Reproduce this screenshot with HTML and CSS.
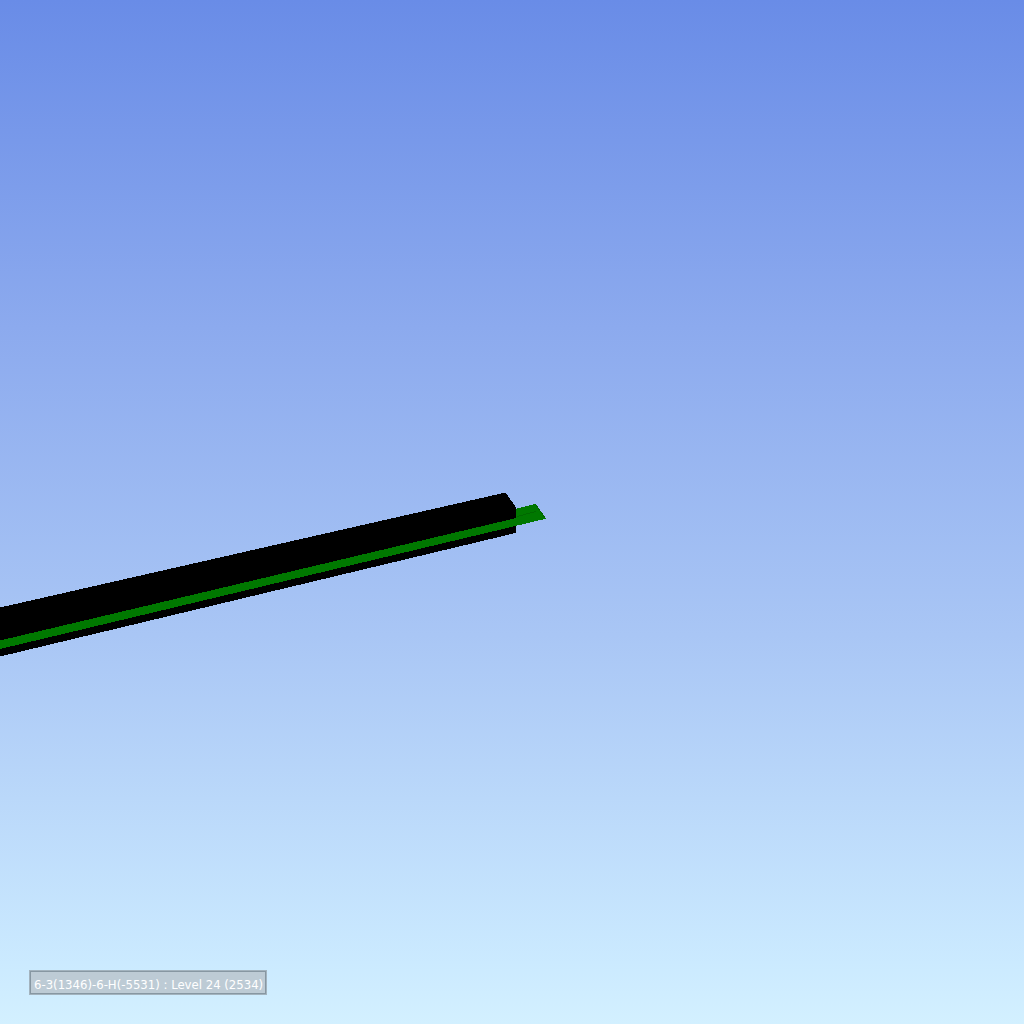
FILE: index.html
```html
<!DOCTYPE html>
<html lang="en">
<head>
<meta charset="utf-8">
<title>Model view</title>
<link rel="stylesheet" href="styles.css">
</head>
<body>
<main class="viewport">
  <svg class="scene" viewBox="0 0 1024 1024" shape-rendering="crispEdges" aria-hidden="true">
    <polygon class="beam" points="0,607.5 505.5,492.5 516.4,508 516.4,532.8 0,656.5"/>
    <polygon class="plate" points="516.4,508.7 535.5,504 546,518.7 0,649 0,640.5 516.4,518"/>
    <polyline class="fold" points="517,516.5 536,511.5"/>
    <polyline class="fold" points="535.5,504.5 545.5,518.5"/>
  </svg>
  <div class="location">6-3(1346)-6-H(-5531) : Level 24 (2534)</div>
</main>
</body>
</html>
```
FILE: styles.css
```css
body {
  margin: 0;
}

.viewport {
  box-sizing: border-box;
  width: 1024px;
  height: 1024px;
  padding: 0 0 29px 29px;
  display: flex;
  align-items: flex-end;
  position: relative;
  overflow: hidden;
  background: linear-gradient(#698ce7 0%, #8caaee 32%, #a9c6f5 62%, #cbeaff 94%, #d3f0ff 100%);
}

.scene {
  position: absolute;
  inset: 0;
  width: 1024px;
  height: 1024px;
}

.beam {
  fill: #000;
}

.plate {
  fill: #007800;
}

.fold {
  fill: none;
  stroke: #006800;
  stroke-width: 1;
}

.location {
  position: relative;
  box-sizing: border-box;
  width: 238px;
  height: 25px;
  padding: 4px 0 0 4px;
  border: 1px solid #a3b3be;
  background: #bdcbd5;
  box-shadow: inset 0 0 0 1px #8797a2;
  color: #fff;
  font: 13px/20px "DejaVu Sans Condensed", "DejaVu Sans", sans-serif;
  font-stretch: condensed;
  white-space: nowrap;
}
```
